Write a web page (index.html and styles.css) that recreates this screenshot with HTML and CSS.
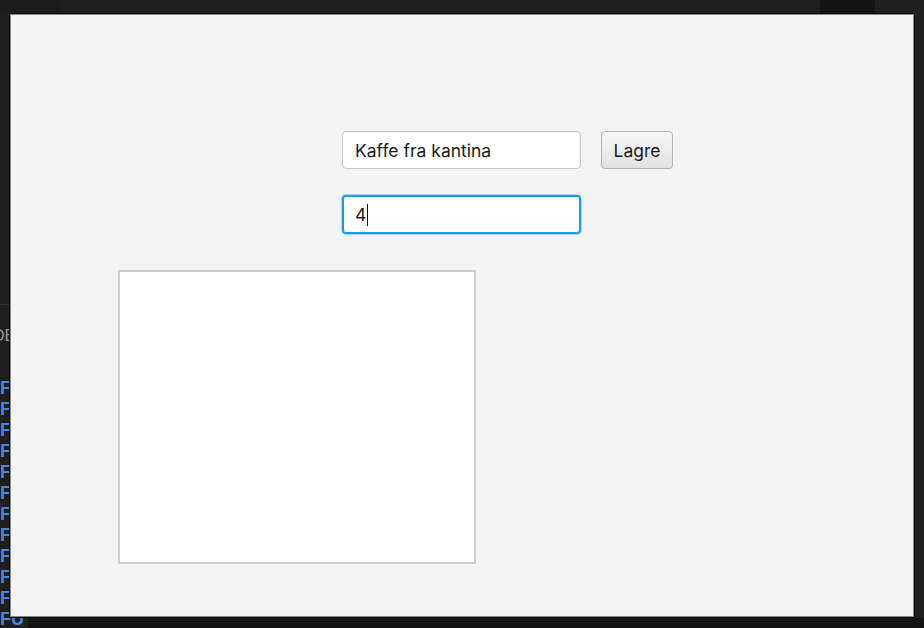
FILE: index.html
```html
<!DOCTYPE html>
<html lang="no">
<head>
<meta charset="utf-8">
<title>Kaffe</title>
<link rel="stylesheet" href="styles.css">
</head>
<body>
<div class="desktop">
  <div class="topbar">
    <div class="tab tab-a"></div>
    <div class="tab tab-b"></div>
  </div>
  <div class="behind">
    <div class="behind-line"></div>
    <div class="behind-de">DE</div>
    <div class="behind-list">
      <span>F</span><span>F</span><span>F</span><span>F</span><span>F</span><span>F</span>
      <span>F</span><span>F</span><span>F</span><span>F</span><span>F</span><span>FU</span>
    </div>
  </div>
  <div class="bottombar"></div>

  <div class="window">
    <div class="form">
      <div class="row">
        <div class="field">Kaffe fra kantina</div>
        <div class="button">Lagre</div>
      </div>
      <div class="row">
        <div class="field focused">4<span class="caret"></span></div>
      </div>
    </div>
    <div class="canvas"></div>
  </div>
</div>
</body>
</html>
```

FILE: styles.css
```css
html, body {
  margin: 0;
  padding: 0;
  background: #1e1e1e;
  width: 924px;
  height: 628px;
  overflow: hidden;
  font-family: Inter, "Noto Sans", sans-serif;
}

.desktop {
  position: relative;
  width: 924px;
  height: 628px;
  background: #1e1e1e;
}

.topbar {
  height: 14px;
  background: #1f1f1f;
  position: relative;
}
.tab {
  position: absolute;
  top: 0;
  height: 13px;
  background: #141414;
}
.tab-a { left: 0; width: 60px; background: #1b1b1b; }
.tab-b { left: 820px; width: 55px; }

.behind {
  position: absolute;
  left: 0;
  top: 14px;
  width: 30px;
  height: 614px;
}
.behind-line {
  position: absolute;
  left: 0;
  top: 290px;
  width: 10px;
  height: 1px;
  background: #333;
}
.behind-de {
  position: absolute;
  left: -7px;
  top: 313px;
  font: 16px "Liberation Sans", sans-serif;
  color: #9a9a9a;
}
.behind-list {
  position: absolute;
  left: 0;
  top: 364px;
  display: flex;
  flex-direction: column;
  font: bold 18px "Liberation Sans", sans-serif;
  line-height: 21px;
  color: #4a86d6;
}

.bottombar {
  position: absolute;
  left: 28px;
  top: 618px;
  width: 896px;
  height: 10px;
  background: #141414;
}

.window {
  position: absolute;
  left: 9px;
  top: 13px;
  width: 904px;
  height: 603px;
  background: #f3f3f3;
  border: 1px solid #0a0a0a;
  box-shadow: inset 0 0 0 1px #8a8a8a;
  box-sizing: content-box;
}

.form {
  display: flex;
  flex-direction: column;
  gap: 26px;
  padding: 117px 0 0 332px;
}
.row {
  display: flex;
  gap: 20px;
  align-items: flex-start;
}

.field {
  box-sizing: border-box;
  width: 239px;
  height: 38px;
  background: #fff;
  border: 1px solid #c6c6c6;
  border-radius: 4px;
  padding: 0 12px;
  display: flex;
  align-items: center;
  font-size: 17.5px;
  color: #1a1a1a;
  box-shadow: inset 0 1px 1px rgba(0,0,0,0.04);
}
.field.focused {
  height: 39px;
  border: 2px solid #1c9be0;
  padding-left: 11px;
  box-shadow: 0 0 0 1px #a9d7f3;
}
.caret {
  display: inline-block;
  width: 1px;
  height: 22px;
  background: #111;
  margin-left: 1px;
}

.button {
  box-sizing: border-box;
  width: 72px;
  height: 38px;
  border: 1px solid #b4b4b4;
  border-radius: 4px;
  background: linear-gradient(#f7f7f7, #e2e2e2);
  display: flex;
  align-items: center;
  justify-content: center;
  font-size: 17.5px;
  color: #1a1a1a;
}

.canvas {
  box-sizing: border-box;
  width: 358px;
  height: 294px;
  margin: 36px 0 0 108px;
  background: #fff;
  border: 2px solid #cdcdcd;
}
```
